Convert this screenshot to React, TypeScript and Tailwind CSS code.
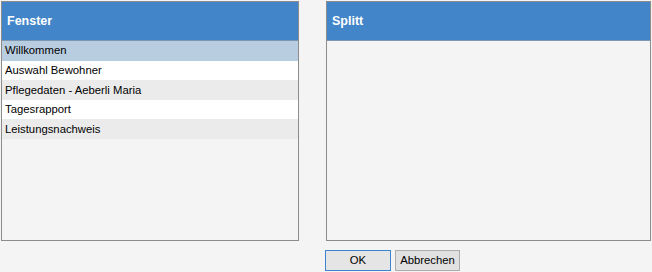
const rows = ['Willkommen', 'Auswahl Bewohner', 'Pflegedaten - Aeberli Maria', 'Tagesrapport', 'Leistungsnachweis'];

function Panel({ title, children, className }: { title: string; children?: React.ReactNode; className: string }) {
  return (
    <div className={`flex flex-col border border-[#8c8c8c] bg-[#f4f4f4] ${className}`}>
      <div className="h-[39px] shrink-0 flex items-center px-[5px] bg-[#4285c8] border-b border-[#7d98b3] text-white font-bold text-[12.5px]">
        {title}
      </div>
      <div className="flex-1 flex flex-col">{children}</div>
    </div>
  );
}

export default function App() {
  return (
    <div className="w-[652px] h-[272px] bg-[#f4f4f4] pl-[1px] pt-[1px] font-['Liberation_Sans',Arial,sans-serif] text-[11.3px] text-black">
      <div className="flex gap-[27px] h-[240px]">
        <Panel title="Fenster" className="w-[298px]">
          {rows.map((r, i) => (
            <div
              key={r}
              className={`h-[19.6px] flex items-center px-[3px] ${i === 0 ? 'bg-[#b8cde0]' : i % 2 === 1 ? 'bg-white' : 'bg-[#ebebeb]'}`}
            >
              {r}
            </div>
          ))}
        </Panel>
        <Panel title="Splitt" className="w-[325px]" />
      </div>
      <div className="flex gap-[4px] ml-[324px] mt-[9px]">
        <button className="w-[66px] h-[21px] bg-[#e5e5e5] border border-[#3c83d0] text-[11.3px]">OK</button>
        <button className="w-[65px] h-[21px] bg-[#e1e1e1] border border-[#adadad] text-[11.3px]">Abbrechen</button>
      </div>
    </div>
  );
}
